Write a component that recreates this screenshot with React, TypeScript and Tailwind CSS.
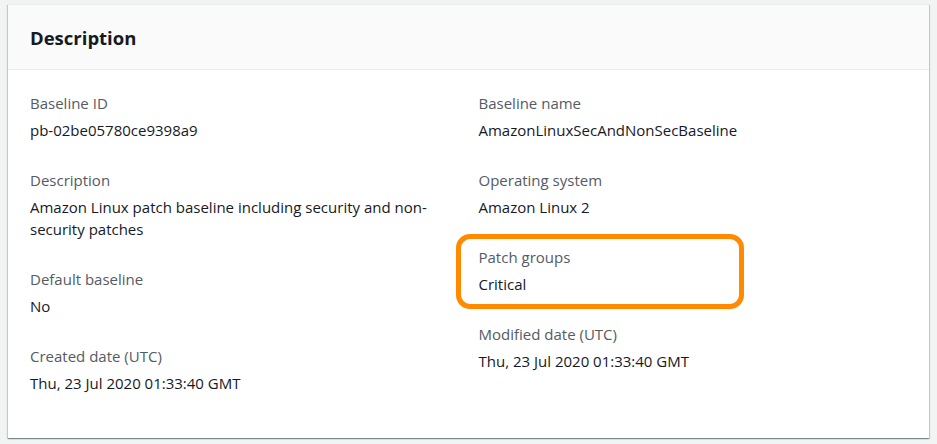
import React from "react";

type Item = { label: string; value: string; highlight?: boolean };

const left: Item[] = [
  { label: "Baseline ID", value: "pb-02be05780ce9398a9" },
  { label: "Description", value: "Amazon Linux patch baseline including security and non-security patches" },
  { label: "Default baseline", value: "No" },
  { label: "Created date (UTC)", value: "Thu, 23 Jul 2020 01:33:40 GMT" },
];

const right: Item[] = [
  { label: "Baseline name", value: "AmazonLinuxSecAndNonSecBaseline" },
  { label: "Operating system", value: "Amazon Linux 2" },
  { label: "Patch groups", value: "Critical", highlight: true },
  { label: "Modified date (UTC)", value: "Thu, 23 Jul 2020 01:33:40 GMT" },
];

function Field({ item }: { item: Item }) {
  return (
    <div className="relative flex flex-col gap-[5px]">
      {item.highlight && (
        <div className="absolute -left-[23px] w-[288px] -top-[12px] -bottom-[14px] rounded-[14px] border-[5px] border-[#ff8a00] pointer-events-none" />
      )}
      <div className="text-[15px] leading-[22px] text-[#545b64]">{item.label}</div>
      <div className="text-[15px] leading-[22px] text-[#16191f]">{item.value}</div>
    </div>
  );
}

export default function App() {
  return (
    <div
      className="min-h-[444px] w-[937px] bg-[#f2f3f3] pl-[8px] pr-[8px] pt-[4px]"
      style={{ fontFamily: '"Open Sans", "Noto Sans", Arial, sans-serif' }}
    >
      <div className="w-[921px] h-[434px] bg-white border-t border-[#eaeded] shadow-[0_1px_1px_0_rgba(0,28,36,0.3),1px_1px_1px_0_rgba(0,28,36,0.15),-1px_1px_1px_0_rgba(0,28,36,0.15)]">
        <div className="h-[65px] bg-[#fafafa] border-b border-[#eaeded] px-[22px] flex items-center">
          <h2 className="text-[18.5px] leading-[22px] font-bold text-[#16191f] pt-[2px]">Description</h2>
        </div>
        <div className="grid grid-cols-2 gap-x-[20px] px-[22px] pt-[22px]">
          <div className="flex flex-col gap-[28px]">
            {left.map((it) => (
              <Field key={it.label} item={it} />
            ))}
          </div>
          <div className="flex flex-col gap-[28px]">
            {right.map((it) => (
              <Field key={it.label} item={it} />
            ))}
          </div>
        </div>
      </div>
    </div>
  );
}
